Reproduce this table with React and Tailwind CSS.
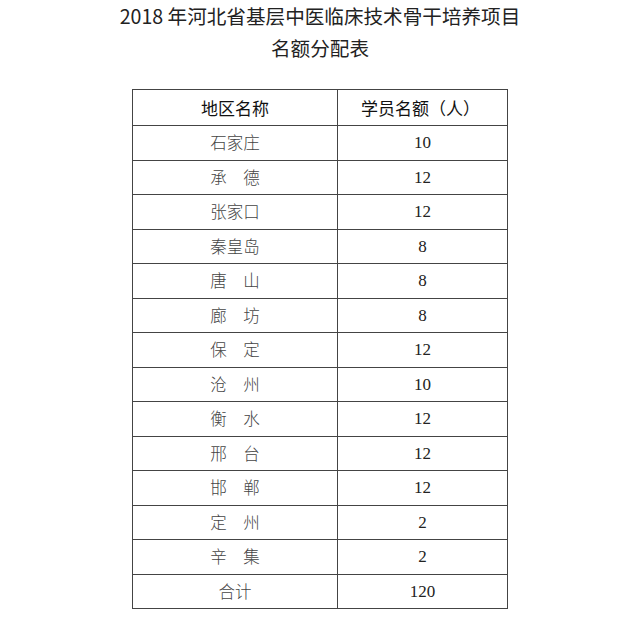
const rows = [
  { name: '石家庄', n: '10' },
  { name: '承　德', n: '12' },
  { name: '张家口', n: '12' },
  { name: '秦皇岛', n: '8' },
  { name: '唐　山', n: '8' },
  { name: '廊　坊', n: '8' },
  { name: '保　定', n: '12' },
  { name: '沧　州', n: '10' },
  { name: '衡　水', n: '12' },
  { name: '邢　台', n: '12' },
  { name: '邯　郸', n: '12' },
  { name: '定　州', n: '2' },
  { name: '辛　集', n: '2' },
  { name: '合计', n: '120' },
]

const cjk = "font-['Noto_Sans_CJK_SC','Noto_Sans',sans-serif]"

export default function App() {
  return (
    <div className="w-[640px] h-[620px] bg-white overflow-hidden">
      {/* Title */}
      <div className={`${cjk} text-[19.6px] leading-[32px] text-[#222] text-center`}>
        <div>2018 年河北省基层中医临床技术骨干培养项目</div>
        <div>名额分配表</div>
      </div>

      {/* Table */}
      <div className="mt-[25px] ml-[132px] w-[376px] border border-[#444]">
        <div className="flex h-[35px]">
          <div className={`w-[204px] flex items-center justify-center ${cjk} font-normal text-[17px] text-[#111]`}>
            地区名称
          </div>
          <div className={`flex-1 border-l border-[#444] flex items-center justify-center ${cjk} font-normal text-[17px] text-[#111] pr-[4px]`}>
            学员名额（人）
          </div>
        </div>
        {rows.map((r) => (
          <div key={r.name} className="flex h-[34.5px] border-t border-[#444]">
            <div className={`w-[204px] flex items-center justify-center ${cjk} font-light text-[16.5px] text-[#444]`}>
              {r.name}
            </div>
            <div className="flex-1 border-l border-[#444] flex items-center justify-center font-['Liberation_Serif',serif] text-[17px] text-[#222]">
              {r.n}
            </div>
          </div>
        ))}
      </div>
    </div>
  )
}
